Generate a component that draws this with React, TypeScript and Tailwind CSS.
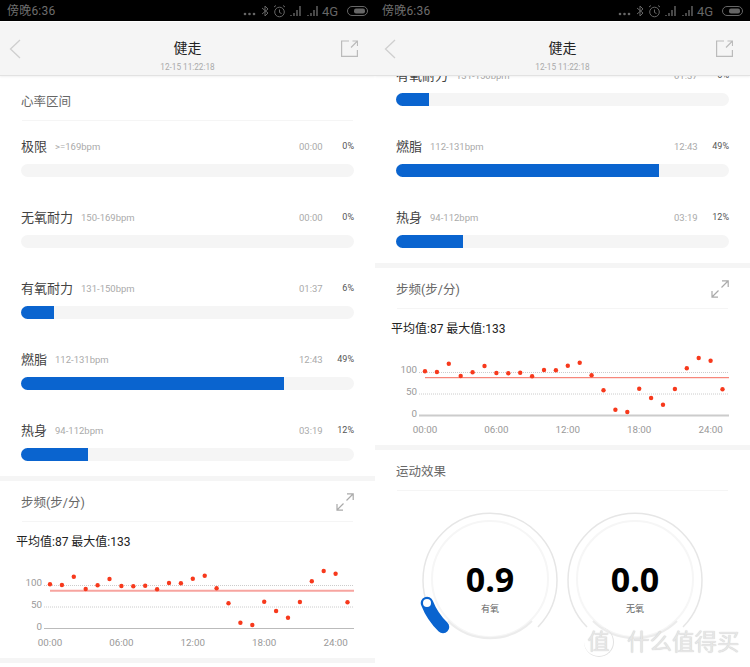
const font = { fontFamily: 'Roboto, "Noto Sans CJK SC", sans-serif' }

const steps = [
  584.3, 585, 576.7, 589, 585.3, 579, 586, 586.3, 585.7, 589.3, 583, 583.3, 578.7, 575.7, 588.3, 603.3, 622.7, 625, 601.7,
  611, 617.7, 602, 581.3, 571, 573.7, 602.3,
]

const StatusBar = () => (
  <div className="h-[21px] bg-black flex items-center justify-between pl-[7px] pr-[6px]">
    <span className="text-[12px] text-[#6e6e6e] tracking-[0.2px]">傍晚6:36</span>
    <svg width="126" height="16" viewBox="0 0 126 16" fill="none" stroke="#666">
      <g fill="#666" stroke="none">
        <circle cx="2" cy="11" r="1.300" />
        <circle cx="6.500" cy="11" r="1.300" />
        <circle cx="11" cy="11" r="1.300" />
      </g>
      <path d="M19 5l6 5-3 3V3l3 3-6 5" strokeWidth="1" />
      <circle cx="36.500" cy="9" r="4.800" strokeWidth="1" />
      <path d="M36.500 6.500v3l2 1M31 4l2-1.500M42 4l-2-1.500" strokeWidth="1" />
      <path d="M48 13v-1M51 13v-3M54 13V7M57 13V3" strokeWidth="1.400" />
      <path d="M65 13v-1M68 13v-3M71 13V7M74 13V3" strokeWidth="1.400" />
      <rect x="104.500" y="3.500" width="20" height="9" rx="4.500" strokeWidth="1" />
      <rect x="111" y="5.500" width="11" height="5" rx="2" fill="#666" stroke="none" />
      <text x="79" y="13" fill="#666" stroke="none" fontSize="13" style={font}>
        4G
      </text>
    </svg>
  </div>
)

const Header = () => (
  <div className="relative z-10 h-[54px] mt-px bg-[#f5f5f5] border-b border-[#e2e2e2] shadow-[0_1px_2px_rgba(0,0,0,0.06)] flex items-center justify-between pl-[9px] pr-[17px]">
    <div className="w-[25px]">
      <svg width="12" height="20" viewBox="0 0 12 20" fill="none" stroke="#cfcfcf" strokeWidth="1.300" className="block">
        <path d="M11 1L1.500 10l9.500 9" />
      </svg>
    </div>
    <div className="flex flex-col items-center pt-[14px]">
      <span className="text-[14px] leading-[20px] text-[#222]">健走</span>
      <span className="text-[8.200px] leading-[12px] mt-[3px] text-[#aaa]">12-15 11:22:18</span>
    </div>
    <svg width="17" height="17" viewBox="0 0 17 17" fill="none" stroke="#bbb" strokeWidth="1.200">
      <path d="M8 1H.600v15.400H16.400V10M10 7.500L16 1.500M11.500 1H16.500V6" />
    </svg>
  </div>
)

const SectionTitle = ({ title, expand }: { title: string; expand?: boolean }) => (
  <div className="mx-[22px] h-[40px] border-b border-[#f5f5f5] flex items-center justify-between">
    <span className="text-[12.500px] text-[#666] pt-[3px] -ml-px">{title}</span>
    {expand && (
      <svg width="18" height="18" viewBox="0 0 18 18" fill="none" stroke="#aaa" strokeWidth="1.200" className="mr-[-1px]">
        <path d="M10.500 7.500L17 1M11 .800h6.200V7M7.500 10.500L1 17M1 11v6.200h6" />
      </svg>
    )}
  </div>
)

const ZoneRow = ({ name, range, time, pct, width }: { name: string; range: string; time: string; pct: string; width: number }) => (
  <div className="h-[71px] px-[21px] pt-[16px]">
    <div className="h-[20px] flex items-center">
      <span className="text-[13px] text-[#444]">{name}</span>
      <span className="text-[9.500px] text-[#aaa] ml-[8px]">{range}</span>
      <span className="text-[9.500px] text-[#aaa] ml-auto w-[24px]">{time}</span>
      <span className="text-[9px] text-[#555] w-[31px] text-right">{pct}</span>
    </div>
    <div className="h-[13px] mt-[7px] rounded-full bg-[#f5f5f5] overflow-hidden">
      <div className="h-full bg-[#0a64cf]" style={{ width }} />
    </div>
  </div>
)

const StepsChart = ({ soft }: { soft?: boolean }) => (
  <svg width="375" height="98" viewBox="0 560 375 98" className="block">
    <path d="M44 585.500H354" stroke="#ccc" strokeDasharray="1 1" />
    <path d="M44 607H354" stroke="#ccc" strokeDasharray="1 1" />
    <path d="M44 628.500H354" stroke={soft ? '#bbb' : '#ccc'} strokeWidth={soft ? 1 : 2} />
    <path d="M50 590.700H354" stroke={soft ? '#f7a5a0' : '#f56a5c'} strokeWidth={soft ? 2 : 1} />
    {steps.map((y, i) => (
      <circle key={i} cx={50 + 11.9 * i} cy={y} r="2.200" fill="#f7391c" />
    ))}
    <g fill="#999" fontSize="9.800" style={font}>
      <text x="42" y="586" textAnchor="end">
        100
      </text>
      <text x="42" y="608" textAnchor="end">
        50
      </text>
      <text x="42" y="629.500" textAnchor="end">
        0
      </text>
      {['00:00', '06:00', '12:00', '18:00', '24:00'].map((t, i) => (
        <text key={t} x={50 + 71.4 * i} y="646" textAnchor="middle">
          {t}
        </text>
      ))}
    </g>
  </svg>
)

const Gap = () => <div className="h-[5px] bg-[#f5f5f5]" />

const StepsSection = ({ soft }: { soft?: boolean }) => (
  <>
    <Gap />
    <div className="pt-px">
      <SectionTitle title="步频(步/分)" expand />
    </div>
    <p className="ml-[16px] mt-[10px] h-[20px] text-[12px] leading-[20px] text-[#222]">平均值:87 最大值:133</p>
    <div className="mt-[8px]">
      <StepsChart soft={soft} />
    </div>
    <Gap />
  </>
)

const Gauge = ({ value, label, active }: { value: string; label: string; active?: boolean }) => (
  <div className="relative w-[140px] h-[140px]">
    <svg width="140" height="140" viewBox="0 0 140 140" fill="none">
      <circle cx="70" cy="70" r="58" stroke="#f6f6f6" strokeWidth="2" />
      <path d="M28 112A60 60 0 0 0 112 112" stroke="#ececec" strokeWidth="2" />
      <path d="M22 118A67 67 0 1 1 118 118" stroke="#e6e6e6" strokeWidth="1.500" />
      {active && (
        <>
          <path d="M7 94A67 67 0 0 0 23 118" stroke="#0a64cf" strokeWidth="12.500" strokeLinecap="round" />
          <circle cx="7" cy="94" r="4" fill="#fff" />
        </>
      )}
    </svg>
    <div className="absolute inset-0 flex flex-col items-center pt-[52px]">
      <span className="text-[34px] leading-[36px] font-bold text-black" style={{ fontFamily: '"Open Sans", sans-serif' }}>
        {value}
      </span>
      <span className="text-[9px] leading-[12px] mt-[6px] text-[#666]">{label}</span>
    </div>
  </div>
)

const LeftPhone = () => (
  <div className="w-[375px] h-[667px] overflow-hidden bg-white">
    <StatusBar />
    <Header />
    <div className="h-[5px]" />
    <SectionTitle title="心率区间" />
    <ZoneRow name="极限" range=">=169bpm" time="00:00" pct="0%" width={0} />
    <ZoneRow name="无氧耐力" range="150-169bpm" time="00:00" pct="0%" width={0} />
    <ZoneRow name="有氧耐力" range="131-150bpm" time="01:37" pct="6%" width={33} />
    <ZoneRow name="燃脂" range="112-131bpm" time="12:43" pct="49%" width={263} />
    <ZoneRow name="热身" range="94-112bpm" time="03:19" pct="12%" width={67} />
    <StepsSection soft />
  </div>
)

const RightPhone = () => (
  <div className="relative w-[375px] h-[667px] overflow-hidden bg-white">
    <StatusBar />
    <Header />
    <div className="-mt-[26px]">
      <ZoneRow name="有氧耐力" range="131-150bpm" time="01:37" pct="6%" width={33} />
      <ZoneRow name="燃脂" range="112-131bpm" time="12:43" pct="49%" width={263} />
      <ZoneRow name="热身" range="94-112bpm" time="03:19" pct="12%" width={67} />
    </div>
    <StepsSection />
    <div className="pt-px">
      <SectionTitle title="运动效果" />
    </div>
    <div className="flex justify-center gap-[5px] mt-[18px]">
      <Gauge value="0.9" label="有氧" active />
      <Gauge value="0.0" label="无氧" />
    </div>
    <div className="absolute left-[209px] top-[627px] flex items-center text-[#e6e6e6] [text-shadow:0_0_1px_#c4c4c4]">
      <span className="w-[30px] h-[30px] rounded-full border-r border-b border-[#e2e2e2] text-[22px] leading-[30px] text-center">值</span>
      <span className="ml-[13px] text-[22.500px] leading-[30px] whitespace-nowrap">什么值得买</span>
    </div>
  </div>
)

const App = () => (
  <div className="w-[750px] h-[667px] flex bg-white overflow-hidden" style={font}>
    <LeftPhone />
    <RightPhone />
  </div>
)

export default App
